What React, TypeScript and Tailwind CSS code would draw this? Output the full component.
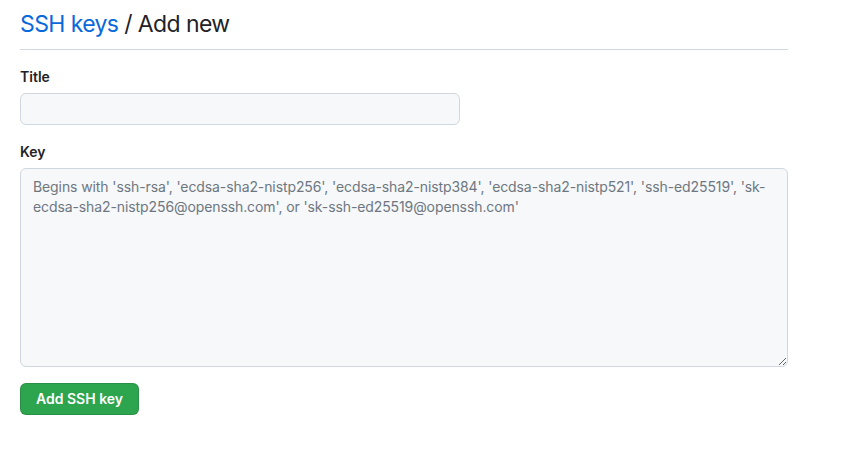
import React from 'react'

export default function App() {
  const placeholder =
    "Begins with 'ssh-rsa', 'ecdsa-sha2-nistp256', 'ecdsa-sha2-nistp384', 'ecdsa-sha2-nistp521', 'ssh-ed25519', 'sk-ecdsa-sha2-nistp256@openssh.com', or 'sk-ssh-ed25519@openssh.com'"

  return (
    <div className="min-h-screen bg-white text-[#1f2328] font-['Inter','Liberation_Sans',sans-serif]">
      <div className="w-[768px] ml-5 pt-1.5">
        {/* Header */}
        <div className="border-b border-[#d0d7de] pb-[7px]">
          <h1 className="text-[23px] leading-9 font-normal tracking-[-0.6px]">
            <a href="#" className="text-[#0969da]">SSH keys</a> / Add new
          </h1>
        </div>

        {/* Form */}
        <form className="mt-4" onSubmit={(e) => e.preventDefault()}>
          <label className="block text-sm font-semibold leading-[21px] mb-1.5">Title</label>
          <input
            type="text"
            className="block w-[440px] h-8 px-3 text-sm bg-[#f6f8fa] border border-[#d0d7de] rounded-md outline-none"
          />

          <label className="block text-sm font-semibold leading-[21px] mt-4 mb-1.5">Key</label>
          <textarea
            placeholder={placeholder}
            className="block w-full h-[199px] px-3 py-2 text-sm leading-5 tracking-[-0.1px] bg-[#f6f8fa] border border-[#d0d7de] rounded-md outline-none placeholder:text-[#6e7781]"
          />

          <button
            type="submit"
            className="mt-4 h-8 px-[15px] text-sm font-semibold text-white bg-[#2da44e] border border-[rgba(27,31,36,0.15)] rounded-md"
          >
            Add SSH key
          </button>
        </form>
      </div>
    </div>
  )
}
